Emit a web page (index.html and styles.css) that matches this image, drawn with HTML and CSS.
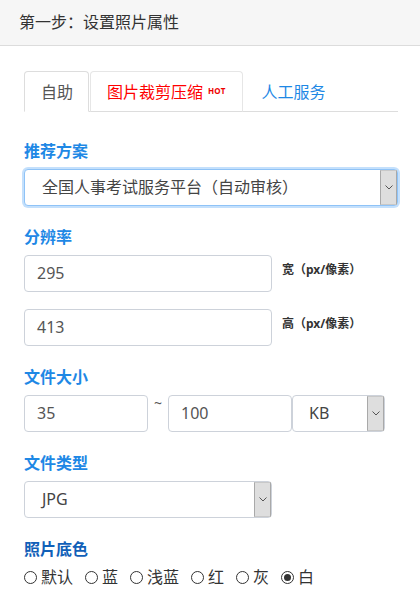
FILE: index.html
```html
<!DOCTYPE html>
<html lang="zh-CN">
<head>
<meta charset="utf-8">
<title>第一步：设置照片属性</title>
<link rel="stylesheet" href="styles.css">
</head>
<body>
<div class="header">第一步：设置照片属性</div>
<div class="content">
  <ul class="tabs">
    <li class="tab active">自助</li>
    <li class="tab hot">图片裁剪压缩<span class="hot-badge">HOT</span></li>
    <li class="tab link">人工服务</li>
  </ul>

  <div class="label">推荐方案</div>
  <div class="select focus wide">
    <span class="select-text">全国人事考试服务平台（自动审核）</span>
    <span class="arrow"><svg width="8" height="5" viewBox="0 0 8 5"><path d="M0.5 0.5 L4 4 L7.5 0.5" fill="none" stroke="#555" stroke-width="1"/></svg></span>
  </div>

  <div class="label gap">分辨率</div>
  <div class="res-row">
    <div class="input mid">295</div>
    <span class="side">宽（px/像素）</span>
  </div>
  <div class="res-row second">
    <div class="input mid">413</div>
    <span class="side">高（px/像素）</span>
  </div>

  <div class="label gap">文件大小</div>
  <div class="size-row">
    <div class="input small">35</div>
    <span class="tilde">~</span>
    <div class="input small2">100</div>
    <div class="select unit">
      <span class="select-text">KB</span>
      <span class="arrow"><svg width="8" height="5" viewBox="0 0 8 5"><path d="M0.5 0.5 L4 4 L7.5 0.5" fill="none" stroke="#555" stroke-width="1"/></svg></span>
    </div>
  </div>

  <div class="label gap">文件类型</div>
  <div class="select mid">
    <span class="select-text">JPG</span>
    <span class="arrow"><svg width="8" height="5" viewBox="0 0 8 5"><path d="M0.5 0.5 L4 4 L7.5 0.5" fill="none" stroke="#555" stroke-width="1"/></svg></span>
  </div>

  <div class="label gap dark">照片底色</div>
  <div class="radios">
    <span class="radio"><span class="dot"></span>默认</span>
    <span class="radio"><span class="dot"></span>蓝</span>
    <span class="radio"><span class="dot"></span>浅蓝</span>
    <span class="radio"><span class="dot"></span>红</span>
    <span class="radio"><span class="dot"></span>灰</span>
    <span class="radio"><span class="dot checked"></span>白</span>
  </div>
</div>
</body>
</html>
```

FILE: styles.css
```css
* { box-sizing: border-box; }
html, body { margin: 0; padding: 0; background: #fff; }
body {
  font-family: "Noto Sans", "Noto Sans CJK SC", sans-serif;
  font-size: 16px;
  color: #333;
  width: 420px;
  height: 603px;
  overflow: hidden;
}
.header {
  height: 46px;
  background: #f6f6f6;
  border-bottom: 1px solid #dcdcdc;
  padding-left: 19px;
  font-size: 16px;
  line-height: 44px;
  color: #333;
}
.content {
  padding: 25px 22px 0 24px;
}
.tabs {
  list-style: none;
  margin: 0;
  padding: 0;
  display: flex;
  border-bottom: 1px solid #dddddd;
}
.tab {
  height: 41px;
  padding: 0 16px 0 17px;
  line-height: 40px;
  font-size: 16px;
  border: 1px solid transparent;
  border-radius: 4px 4px 0 0;
  margin-bottom: -1px;
  display: flex;
  align-items: center;
}
.tab.active {
  color: #555;
  border-color: #dddddd;
  border-bottom-color: #fff;
  background: #fff;
  padding: 0 15px 0 16px;
}
.tab.hot {
  color: #ff0000;
  border-color: #e6e6e6;
  border-bottom-color: #dddddd;
  margin-left: 1px;
  padding: 0 17px 0 16px;
}
.hot-badge {
  font-size: 8px;
  font-weight: bold;
  margin-left: 5px;
  letter-spacing: 0.2px;
  color: #e00;
  position: relative;
  top: -1px;
}
.tab.link { color: #1e88e5; }

.label {
  margin-top: 28px;
  margin-bottom: 7px;
  font-size: 16px;
  line-height: 22px;
  font-weight: bold;
  color: #1e88e5;
}
.label.gap { margin-top: 20px; }
.label.dark { color: #1160b8; }

.select {
  height: 37px;
  border: 1px solid #cdd2da;
  border-radius: 4px;
  display: flex;
  align-items: stretch;
  background: #fff;
  color: #444;
}
.select.wide { width: 374px; }
.select.mid { width: 248px; }
.select.unit { width: 93px; }
.select.focus {
  border-color: #8fc3f7;
  box-shadow: 0 0 0 2px #c4e0fc;
}
.select-text {
  flex: 1;
  padding-left: 17px;
  line-height: 35px;
  font-size: 16px;
  white-space: nowrap;
  overflow: hidden;
}
.unit .select-text { padding-left: 16px; }
.arrow {
  width: 17px;
  background: #dedede;
  border-left: 1px solid #a9a9a9;
  border-right: 1px solid #a9a9a9;
  border-top: 1px solid #c8c8c8;
  border-bottom: 1px solid #c8c8c8;
  display: flex;
  align-items: center;
  justify-content: center;
}

.input {
  height: 37px;
  border: 1px solid #cdd2da;
  border-radius: 4px;
  padding-left: 12px;
  line-height: 35px;
  font-size: 16px;
  color: #555;
  background: #fff;
}
.input.mid { width: 248px; }
.input.small { width: 124px; }
.input.small2 { width: 124px; padding-left: 12px; }

.res-row {
  display: flex;
  align-items: flex-start;
}
.res-row.second { margin-top: 17px; }
.side {
  margin-left: 10px;
  margin-top: 6px;
  font-size: 12px;
  font-weight: bold;
  line-height: 18px;
  color: #333;
}

.size-row {
  display: flex;
  align-items: flex-start;
}
.tilde {
  width: 20px;
  text-align: center;
  font-size: 14px;
  line-height: 16px;
  color: #555;
}

.radios {
  margin-top: 7px;
  display: flex;
  align-items: center;
  font-size: 16px;
  line-height: 20px;
  color: #333;
}
.radio {
  display: flex;
  align-items: center;
  margin-right: 12px;
}
.dot {
  width: 13px;
  height: 13px;
  border: 1px solid #333;
  border-radius: 50%;
  margin-right: 4px;
  display: flex;
  align-items: center;
  justify-content: center;
}
.dot.checked::after {
  content: "";
  width: 7px;
  height: 7px;
  border-radius: 50%;
  background: #333;
}
```
